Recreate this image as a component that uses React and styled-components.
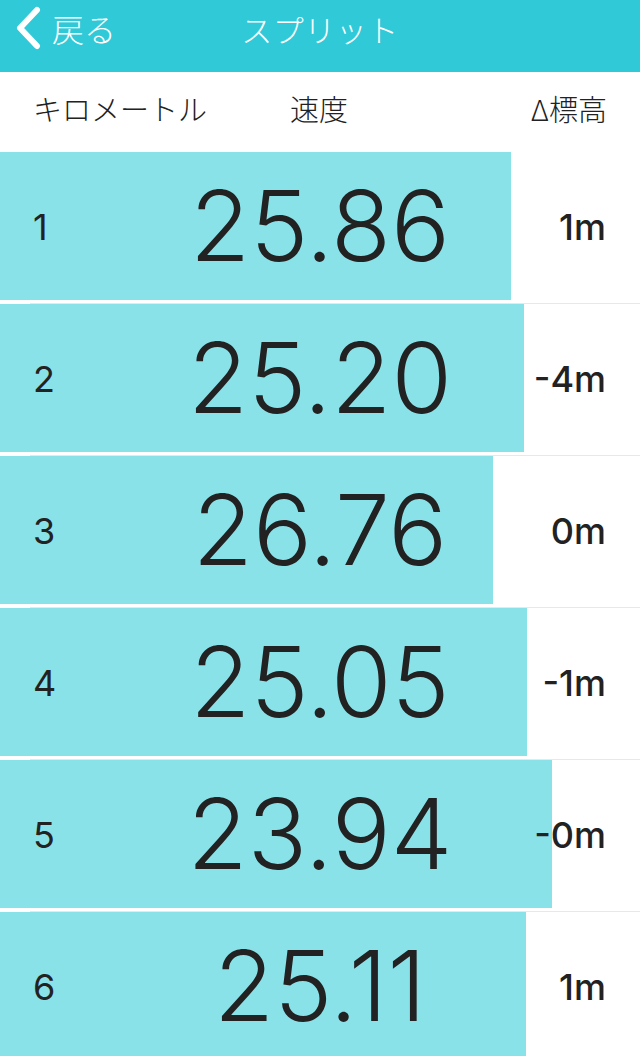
import React from 'react';
import styled, { createGlobalStyle } from 'styled-components';

const splits = [
  { km: 1, speed: '25.86', elev: '1m' },
  { km: 2, speed: '25.20', elev: '-4m' },
  { km: 3, speed: '26.76', elev: '0m' },
  { km: 4, speed: '25.05', elev: '-1m' },
  { km: 5, speed: '23.94', elev: '-0m' },
  { km: 6, speed: '25.11', elev: '1m' },
];

const GlobalStyle = createGlobalStyle`
  html, body {
    margin: 0;
    padding: 0;
    background: #fff;
  }
  body {
    font-family: "Noto Sans CJK JP", "Noto Sans", sans-serif;
    color: #222;
    overflow: hidden;
  }
`;

function App() {
  return (
    <Page>
      <GlobalStyle />
      <NavBar>
        <BackButton>
          <svg width="28" height="44" viewBox="0 0 28 44">
            <path d="M23 4 L6 22 L23 40" fill="none" stroke="#fff" strokeWidth="6" strokeLinecap="round" strokeLinejoin="round" />
          </svg>
          <span>戻る</span>
        </BackButton>
        <Title>スプリット</Title>
      </NavBar>
      <ColumnHeader>
        <HeadLabel>キロメートル</HeadLabel>
        <HeadLabel>速度</HeadLabel>
        <HeadLabel>Δ標高</HeadLabel>
      </ColumnHeader>
      <List>
        {splits.map((s) => (
          <Row key={s.km}>
            <Bar style={{ width: `${13205 / parseFloat(s.speed)}px` }} />
            <Cells>
              <KmCell>{s.km}</KmCell>
              <SpeedCell>{s.speed}</SpeedCell>
              <ElevCell>{s.elev}</ElevCell>
            </Cells>
          </Row>
        ))}
      </List>
    </Page>
  );
}

const Page = styled.div`
  width: 640px;
  height: 1056px;
  overflow: hidden;
`;

const NavBar = styled.div`
  height: 72px;
  background: #2fc9d8;
  display: grid;
  grid-template-columns: 1fr auto 1fr;
  align-items: start;
  color: #fff;
`;

const BackButton = styled.div`
  display: flex;
  align-items: center;
  gap: 10px;
  padding-left: 14px;
  height: 56px;
  font-size: 32px;
  font-weight: 300;

  span {
    line-height: 1;
  }
`;

const Title = styled.div`
  height: 56px;
  display: flex;
  align-items: center;
  font-size: 31px;
  font-weight: 300;
  letter-spacing: 0.5px;
`;

const ColumnHeader = styled.div`
  height: 80px;
  display: grid;
  grid-template-columns: 257px 1fr auto;
  align-items: center;
  padding: 0 33px 0 33px;
`;

const HeadLabel = styled.div`
  font-size: 29px;
  font-weight: 300;
  color: #222;
  padding-bottom: 8px;
`;

const List = styled.div`
  display: flex;
  flex-direction: column;
`;

const Row = styled.div`
  position: relative;
  height: 151px;
  display: grid;
  border-bottom: 1px solid transparent;

  &::after {
    content: '';
    position: absolute;
    left: 30px;
    right: 0;
    bottom: -1px;
    height: 1px;
    background: #e8e8e8;
  }
`;

const Bar = styled.div`
  grid-area: 1 / 1;
  height: 148px;
  background: #8ae2e9;
`;

const Cells = styled.div`
  grid-area: 1 / 1;
  height: 148px;
  display: grid;
  grid-template-columns: 1fr auto 1fr;
  align-items: center;
  font-family: Inter, "Noto Sans", sans-serif;
  color: #222;
  z-index: 1;
`;

const KmCell = styled.div`
  padding-left: 33px;
  font-size: 36px;
  font-weight: 400;
  padding-top: 2px;
`;

const SpeedCell = styled.div`
  font-size: 98px;
  font-weight: 300;
  line-height: 1;
`;

const ElevCell = styled.div`
  justify-self: end;
  padding-right: 34px;
  padding-top: 2px;
  font-size: 36px;
  font-weight: 500;
`;

export default App;
